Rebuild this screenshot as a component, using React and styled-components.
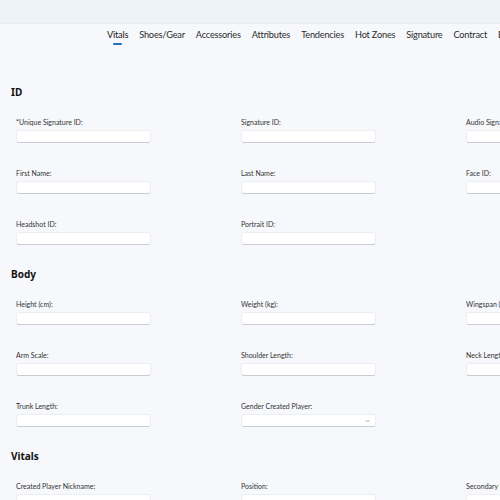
import React from 'react'
import styled, { createGlobalStyle } from 'styled-components';

const GlobalStyle = createGlobalStyle`
  html, body {
    margin: 0;
    padding: 0;
    background: #f6f8fb;
    overflow: hidden;
  }
  body {
    font-family: Lato, "Noto Sans", sans-serif;
    color: #1f1f1f;
  }
`;

const Page = styled.div`
  width: 720px;
  min-height: 500px;
  background: #f6f8fb;
`;

const TopBar = styled.div`
  height: 23px;
  background: linear-gradient(180deg, #eef2f9 0%, #edf1f8 100%);
  border-bottom: 1px solid #e6eaf1;
`;

const Tabs = styled.nav`
  display: flex;
  gap: 11px;
  padding: 4px 0 0 107px;
  height: 25px;
`;

const Tab = styled.div`
  position: relative;
  font-size: 9.2px;
  letter-spacing: -0.2px;
  line-height: 14px;
  color: ${p => (p.$active ? '#1a1a1a' : '#2b2b2b')};
  white-space: nowrap;

  &::after {
    content: '';
    display: ${p => (p.$active ? 'block' : 'none')};
    position: absolute;
    left: 50%;
    top: 15px;
    width: 9px;
    height: 2px;
    margin-left: -4.5px;
    border-radius: 1px;
    background: #1d6fc2;
  }
`;

const Content = styled.div`
  padding: 32px 0 0 11px;
`;

const Section = styled.section`
  margin-bottom: 22px;
`;

const SectionTitle = styled.h2`
  margin: 0 0 18px;
  font-family: "Noto Sans", sans-serif;
  font-size: 10px;
  line-height: 14px;
  font-weight: 700;
  color: #111;
`;

const FieldGrid = styled.div`
  display: grid;
  grid-template-columns: repeat(3, 225px);
  row-gap: 25px;
  padding-left: 5px;
`;

const Field = styled.div`
  display: flex;
  flex-direction: column;
  gap: 3px;
`;

const Label = styled.label`
  font-size: 7px;
  line-height: 10px;
  color: #333;
  white-space: nowrap;
`;

const Input = styled.div`
  position: relative;
  width: 135px;
  height: 13px;
  box-sizing: border-box;
  background: #fff;
  border-radius: 3px;
  border: 1px solid #eceef2;
  border-bottom-color: #c9ccd2;
`;

const Chevron = styled.svg`
  position: absolute;
  right: 5px;
  top: 4px;
  width: 5px;
  height: 4px;
`;

const TABS = ['Vitals', 'Shoes/Gear', 'Accessories', 'Attributes', 'Tendencies', 'Hot Zones', 'Signature', 'Contract', 'Badges'];

const SECTIONS = [
  {
    title: 'ID',
    fields: [
      ['*Unique Signature ID:'], ['Signature ID:'], ['Audio Signature ID:'],
      ['First Name:'], ['Last Name:'], ['Face ID:'],
      ['Headshot ID:'], ['Portrait ID:'], null,
    ],
  },
  {
    title: 'Body',
    fields: [
      ['Height (cm):'], ['Weight (kg):'], ['Wingspan (cm):'],
      ['Arm Scale:'], ['Shoulder Length:'], ['Neck Length:'],
      ['Trunk Length:'], ['Gender Created Player:', true], null,
    ],
  },
  {
    title: 'Vitals',
    fields: [
      ['Created Player Nickname:', true], ['Position:', true], ['Secondary Position:', true],
    ],
  },
];

function App() {
  return (
    <Page>
      <GlobalStyle />
      <TopBar />
      <Tabs>
        {TABS.map(t => (
          <Tab key={t} $active={t === 'Vitals'}>{t}</Tab>
        ))}
      </Tabs>
      <Content>
        {SECTIONS.map(s => (
          <Section key={s.title}>
            <SectionTitle>{s.title}</SectionTitle>
            <FieldGrid>
              {s.fields.map((f, i) =>
                f ? (
                  <Field key={i}>
                    <Label>{f[0]}</Label>
                    <Input>
                      {f[1] && (
                        <Chevron viewBox="0 0 5 4">
                          <path d="M0.5 1 L2.5 3 L4.5 1" fill="none" stroke="#8a8a8a" strokeWidth="0.7" />
                        </Chevron>
                      )}
                    </Input>
                  </Field>
                ) : (
                  <div key={i} />
                )
              )}
            </FieldGrid>
          </Section>
        ))}
      </Content>
    </Page>
  )
}

export default App
